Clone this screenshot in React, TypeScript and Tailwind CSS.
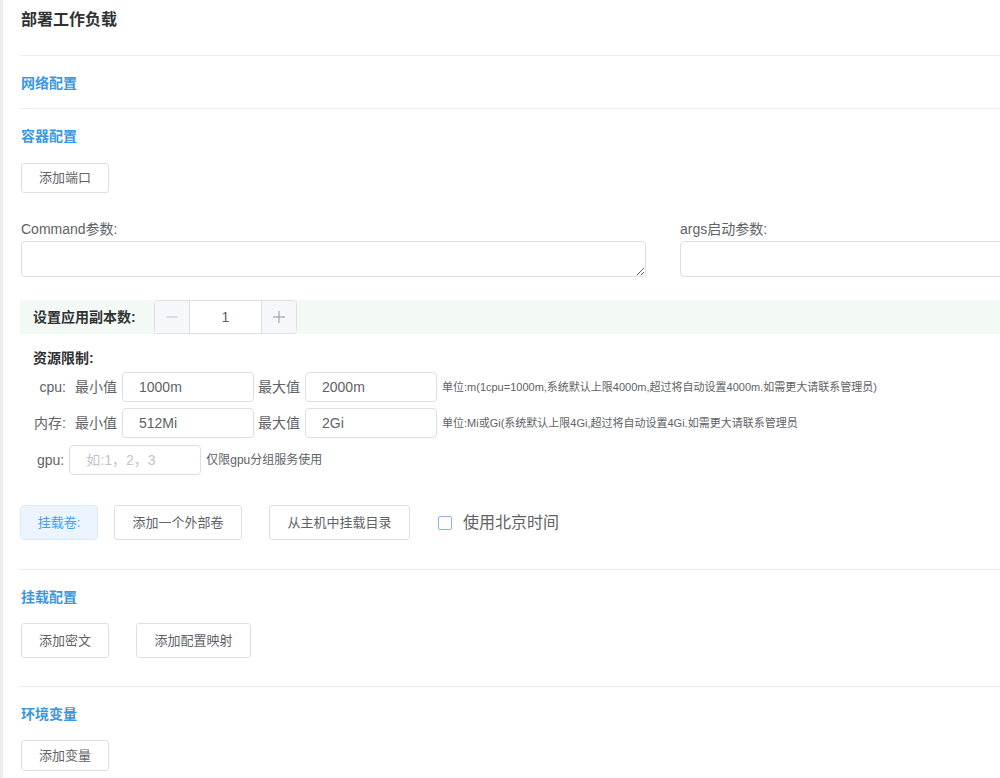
import React from "react";

const font = { fontFamily: '"Liberation Sans", "Noto Sans CJK SC", sans-serif' };

function Btn({ children, w, h = "h-[30px]" }: { children: React.ReactNode; w: string; h?: string }) {
  return (
    <button
      className={`${w} ${h} shrink-0 border border-[#dcdfe6] rounded-[3px] bg-white text-[13px] text-[#606266] flex items-center justify-center`}
    >
      {children}
    </button>
  );
}

function Field({ value, placeholder }: { value?: string; placeholder?: string }) {
  return (
    <input
      readOnly
      defaultValue={value}
      placeholder={placeholder}
      className="w-[132px] h-[30px] shrink-0 border border-[#dcdfe6] rounded-[4px] pl-[16px] text-[14px] text-[#606266] placeholder:text-[#c0c4cc] outline-none bg-white"
    />
  );
}

function SectionHead({ children }: { children: React.ReactNode }) {
  return <div className="pt-[17px] leading-[20px] text-[14px] font-bold text-[#3a97e2]">{children}</div>;
}

export default function App() {
  return (
    <div className="w-[1000px] h-[778px] overflow-hidden bg-white flex" style={font}>
      <div className="w-[3px] shrink-0 bg-[#ececec]" />
      <div className="flex-1 pl-[17px] min-w-0">
        <div className="h-[56px] pt-[10px] pl-[1px] leading-[20px] text-[16px] font-bold text-[#303133] border-b border-[#ebeef5]">
          部署工作负载
        </div>
        <div className="h-[53px] pl-[1px] border-b border-[#ebeef5]">
          <SectionHead>网络配置</SectionHead>
        </div>
        <div className="pb-[29px] border-b border-[#ebeef5]">
          <div className="pl-[1px]">
            <SectionHead>容器配置</SectionHead>
          </div>
          <div className="mt-[17px] pl-[1px]">
            <Btn w="w-[88px]">添加端口</Btn>
          </div>
          <div className="mt-[26px] flex gap-[34px] pl-[1px] w-[1400px]">
            <div className="w-[625px] shrink-0">
              <div className="leading-[20px] text-[14px] text-[#606266]">Command参数:</div>
              <textarea
                readOnly
                className="mt-[2px] block w-[625px] h-[36px] border border-[#dcdfe6] rounded-[4px] outline-none"
              />
            </div>
            <div className="w-[625px] shrink-0">
              <div className="leading-[20px] text-[14px] text-[#606266]">args启动参数:</div>
              <textarea
                readOnly
                className="mt-[2px] block w-[625px] h-[36px] border border-[#dcdfe6] rounded-[4px] outline-none resize-none"
              />
            </div>
          </div>
          <div className="mt-[23px] h-[34px] bg-[#f3faf6] flex items-center pl-[13px]">
            <span className="text-[14px] font-bold text-[#303133] w-[121px]">设置应用副本数:</span>
            <div className="flex h-[34px] border border-[#dcdfe6] rounded-[4px] overflow-hidden bg-white">
              <div className="w-[35px] bg-[#f5f7fa] border-r border-[#dcdfe6] flex items-center justify-center">
                <svg width="12" height="12" viewBox="0 0 12 12"><path d="M0 6h12" stroke="#c0c4cc" strokeWidth="1" /></svg>
              </div>
              <div className="w-[71px] flex items-center justify-center text-[14px] text-[#606266]">1</div>
              <div className="w-[35px] bg-[#f5f7fa] border-l border-[#dcdfe6] flex items-center justify-center">
                <svg width="12" height="12" viewBox="0 0 12 12"><path d="M0 6h12M6 0v12" stroke="#909399" strokeWidth="1" /></svg>
              </div>
            </div>
          </div>
          <div className="pl-[13px]">
            <div className="mt-[14px] leading-[20px] text-[14px] font-bold text-[#303133]">资源限制:</div>
            <div className="mt-[4px] flex items-center h-[30px]">
              <span className="w-[33px] text-right text-[14px] text-[#606266]">cpu:</span>
              <span className="ml-[9px] text-[14px] text-[#606266]">最小值</span>
              <div className="ml-[5px]"><Field value="1000m" /></div>
              <span className="ml-[4px] text-[14px] text-[#606266]">最大值</span>
              <div className="ml-[5px]"><Field value="2000m" /></div>
              <span className="ml-[5px] text-[11px] text-[#606266] whitespace-nowrap">
                单位:m(1cpu=1000m,系统默认上限4000m,超过将自动设置4000m.如需更大请联系管理员)
              </span>
            </div>
            <div className="mt-[6px] flex items-center h-[30px]">
              <span className="w-[33px] text-right text-[14px] text-[#606266] whitespace-nowrap">内存:</span>
              <span className="ml-[9px] text-[14px] text-[#606266]">最小值</span>
              <div className="ml-[5px]"><Field value="512Mi" /></div>
              <span className="ml-[4px] text-[14px] text-[#606266]">最大值</span>
              <div className="ml-[5px]"><Field value="2Gi" /></div>
              <span className="ml-[5px] text-[11px] text-[#606266] whitespace-nowrap">
                单位:Mi或Gi(系统默认上限4Gi,超过将自动设置4Gi.如需更大请联系管理员
              </span>
            </div>
            <div className="mt-[7px] flex items-center h-[30px]">
              <span className="ml-[4px] text-[14px] text-[#606266]">gpu:</span>
              <div className="ml-[5px]"><Field placeholder="如:1，2，3" /></div>
              <span className="ml-[5px] text-[12px] text-[#606266]">仅限gpu分组服务使用</span>
            </div>
          </div>
          <div className="mt-[30px] flex items-center">
            <div className="w-[78px] h-[35px] rounded-[4px] bg-[#ecf5ff] border border-[#d9ecff] text-[13px] text-[#409eff] flex items-center justify-center">
              挂载卷:
            </div>
            <div className="ml-[16px]"><Btn w="w-[128px]" h="h-[35px]">添加一个外部卷</Btn></div>
            <div className="ml-[27px]"><Btn w="w-[141px]" h="h-[35px]">从主机中挂载目录</Btn></div>
            <div className="ml-[28px] w-[14px] h-[14px] border border-[#8fb4dc] rounded-[2px] bg-white" />
            <span className="ml-[11px] text-[16px] text-[#606266]">使用北京时间</span>
          </div>
        </div>
        <div className="pb-[28px] border-b border-[#ebeef5] pl-[1px]">
          <SectionHead>挂载配置</SectionHead>
          <div className="mt-[16px] flex gap-[27px]">
            <Btn w="w-[88px]" h="h-[35px]">添加密文</Btn>
            <Btn w="w-[115px]" h="h-[35px]">添加配置映射</Btn>
          </div>
        </div>
        <div className="pl-[1px]">
          <SectionHead>环境变量</SectionHead>
          <div className="mt-[16px]">
            <Btn w="w-[88px]" h="h-[31px]">添加变量</Btn>
          </div>
        </div>
      </div>
    </div>
  );
}
